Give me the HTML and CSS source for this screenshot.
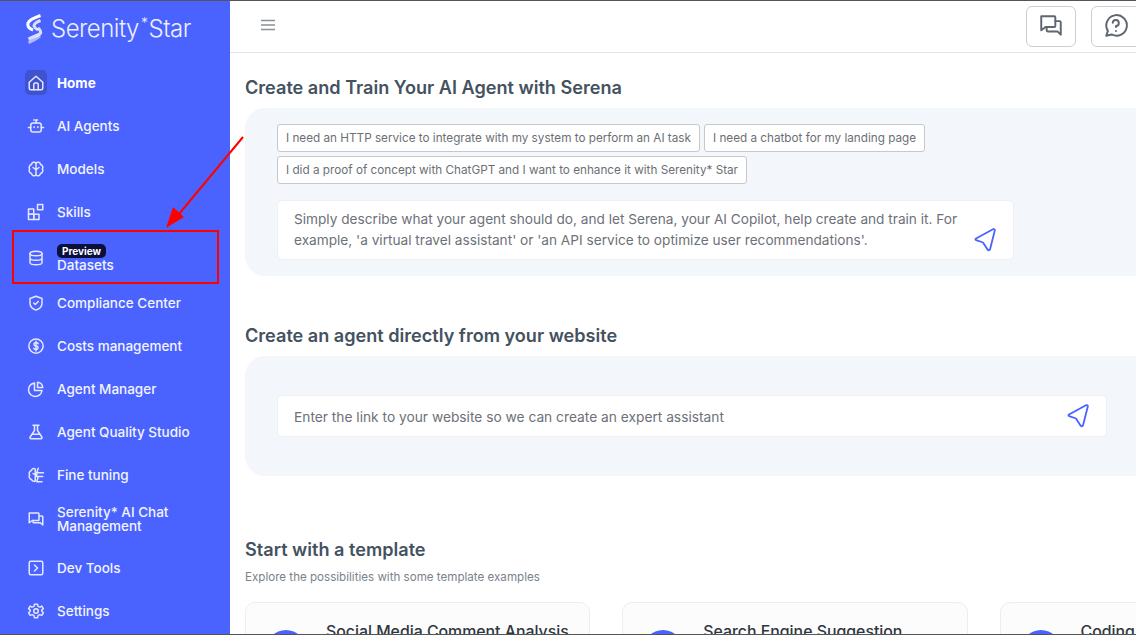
FILE: index.html
```html
<!DOCTYPE html>
<html lang="en">
<head>
  <meta charset="UTF-8" />
  <title>Serenity* Star</title>
  <link rel="stylesheet" href="styles.css">
</head>
<body>
  <div class="app">
    <aside class="sidebar">
      <div class="logo">
        <svg class="logo-mark" width="17" height="30" viewBox="0 0 17 30" fill="none" stroke="#fff" stroke-width="3">
          <path d="M14.500 1.500 Q4 5 2 9 Q1 14 7 16"/>
          <path d="M14.500 6.500 Q8 9 8 12 Q9 14.500 12 16" stroke-opacity=".8"/>
          <path d="M12 14 Q16 17 14 20 L2.500 25" stroke-opacity=".8"/>
          <path d="M14 22 Q9 26 2.500 28.500" stroke-opacity=".55"/>
        </svg>
        <span class="logo-text">Serenity<sup>*</sup>Star</span>
      </div>
      <nav class="nav">
        <a class="nav-item active">
          <span class="nav-icon"><svg width="18" height="18" viewBox="0 0 24 24"><path d="M3 11 12 3l9 8v8a2 2 0 0 1-2 2H5a2 2 0 0 1-2-2z"/><path d="M9 21v-7a2 2 0 0 1 2-2h2a2 2 0 0 1 2 2v7"/></svg></span>
          <span>Home</span>
        </a>
        <a class="nav-item">
          <span class="nav-icon"><svg width="18" height="18" viewBox="0 0 24 24"><rect x="5" y="8" width="14" height="12" rx="3"/><path d="M12 8V5M9 4h5M2 14h3M19 14h3M9.500 13v1M14.500 13v1"/></svg></span>
          <span>AI Agents</span>
        </a>
        <a class="nav-item">
          <span class="nav-icon"><svg width="18" height="18" viewBox="0 0 24 24"><path d="M12 4a3.500 3.500 0 0 0-6 2 4 4 0 0 0-2.500 6A4 4 0 0 0 6 18a3.500 3.500 0 0 0 6 2 3.500 3.500 0 0 0 6-2 4 4 0 0 0 2.500-6A4 4 0 0 0 18 6a3.500 3.500 0 0 0-6-2z"/><path d="M12 4v16M8 10l4 3 4-3"/></svg></span>
          <span>Models</span>
        </a>
        <a class="nav-item">
          <span class="nav-icon"><svg width="18" height="18" viewBox="0 0 24 24"><rect x="2" y="8" width="7" height="7"/><rect x="2" y="15" width="7" height="7"/><rect x="9" y="15" width="7" height="7"/><rect x="14" y="2" width="7" height="7"/></svg></span>
          <span>Skills</span>
        </a>
        <a class="nav-item with-badge">
          <span class="nav-icon"><svg width="18" height="18" viewBox="0 0 24 24"><ellipse cx="12" cy="6" rx="8" ry="3"/><path d="M4 6v12c0 1.700 3.600 3 8 3s8-1.300 8-3V6M4 12c0 1.700 3.600 3 8 3s8-1.300 8-3"/></svg></span>
          <span class="nav-stack">
            <span class="badge">Preview</span>
            <span>Datasets</span>
          </span>
        </a>
        <a class="nav-item">
          <span class="nav-icon"><svg width="18" height="18" viewBox="0 0 24 24"><path d="M12 3l8 3v6c0 5-3.500 8-8 9.500C7.500 20 4 17 4 12V6z"/><path d="M9 12l2 2 4-4"/></svg></span>
          <span>Compliance Center</span>
        </a>
        <a class="nav-item">
          <span class="nav-icon"><svg width="18" height="18" viewBox="0 0 24 24"><circle cx="12" cy="12" r="9.500"/><path d="M15 9a2.500 2 0 0 0-2.500-1.500h-1a2.250 2.250 0 0 0 0 4.500h1a2.250 2.250 0 0 1 0 4.500h-1A2.500 2 0 0 1 9 15M12 5.500v13"/></svg></span>
          <span>Costs management</span>
        </a>
        <a class="nav-item">
          <span class="nav-icon"><svg width="18" height="18" viewBox="0 0 24 24"><path d="M10 4a9 9 0 1 0 10 10h-10z"/><path d="M14 3a7.500 7.500 0 0 1 7 7h-7z"/></svg></span>
          <span>Agent Manager</span>
        </a>
        <a class="nav-item">
          <span class="nav-icon"><svg width="18" height="18" viewBox="0 0 24 24"><path d="M8 3h8M10 3v7l-6 9a1.500 1.500 0 0 0 1.300 2h13.400a1.500 1.500 0 0 0 1.300-2l-6-9V3M7 15h10"/></svg></span>
          <span>Agent Quality Studio</span>
        </a>
        <a class="nav-item">
          <span class="nav-icon"><svg width="18" height="18" viewBox="0 0 24 24"><path d="M11 4a3 3 0 0 0-5 2 4 4 0 0 0-2.500 6A4 4 0 0 0 6 18a3.500 3.500 0 0 0 5 2V4zM8 10l3 2"/><path d="M15 3l-2 6h9M13 9v5h8M15 14l-2 7h7"/></svg></span>
          <span>Fine tuning</span>
        </a>
        <a class="nav-item tall">
          <span class="nav-icon"><svg width="18" height="18" viewBox="0 0 24 24"><path d="M3 4h12a1 1 0 0 1 1 1v8a1 1 0 0 1-1 1H7l-4 3z"/><path d="M16 8h4a1 1 0 0 1 1 1v11l-3-3H9a1 1 0 0 1-1-1v-2"/></svg></span>
          <span>Serenity* AI Chat Management</span>
        </a>
        <a class="nav-item">
          <span class="nav-icon"><svg width="18" height="18" viewBox="0 0 24 24"><rect x="3" y="3" width="18" height="18" rx="2"/><path d="M10 8l4 4-4 4"/></svg></span>
          <span>Dev Tools</span>
        </a>
        <a class="nav-item">
          <span class="nav-icon"><svg width="18" height="18" viewBox="0 0 24 24"><path d="M10 3h4l.7 2.800 2.500 1 2.500-1.400 2 3.400-2 2 .1 1.400 2 2.200-2 3.400-2.600-1-2.500 1.400L14 21h-4l-.7-2.800-2.500-1.400-2.600 1-2-3.400 2-2.200v-1.400l-2-2 2-3.400 2.500 1.400 2.600-1z"/><circle cx="12" cy="12" r="3"/></svg></span>
          <span>Settings</span>
        </a>
      </nav>
    </aside>

    <main class="main">
      <header class="topbar">
        <svg class="menu-icon" width="14" height="12" viewBox="0 0 14 12"><path d="M0 1.500h14M0 6h14M0 10.500h14"/></svg>
        <div class="top-actions">
          <button class="top-btn"><svg width="26" height="26" viewBox="0 0 24 24"><path d="M3 3h12a1 1 0 0 1 1 1v8a1 1 0 0 1-1 1H7l-4 3z"/><path d="M16 7.500h4a1 1 0 0 1 1 1V20l-3-3H9a1 1 0 0 1-1-1v-3"/></svg></button>
          <button class="top-btn"><svg width="26" height="26" viewBox="0 0 24 24"><path d="M3 21l1.500-4.500a9.500 9.500 0 1 1 3.500 3.300z"/><path d="M12 13v-1a2.800 2.800 0 1 0-3-3M12 16.500v.1"/></svg></button>
        </div>
      </header>

      <section class="block">
        <h2 class="block-title">Create and Train Your AI Agent with Serena</h2>
        <div class="panel">
          <div class="chips">
            <span class="chip">I need an HTTP service to integrate with my system to perform an AI task</span>
            <span class="chip">I need a chatbot for my landing page</span>
            <span class="chip">I did a proof of concept with ChatGPT and I want to enhance it with Serenity* Star</span>
          </div>
          <div class="prompt">
            <p>Simply describe what your agent should do, and let Serena, your AI Copilot, help create and train it. For example, 'a virtual travel assistant' or 'an API service to optimize user recommendations'.</p>
            <svg class="send" width="22" height="24" viewBox="0 0 22 24"><path d="M19 1.200 2 10.500Q.8 11.500 2.200 12.200L9 14.500 13.500 21.500Q15 23 16 21.500L20.800 2.500Q21 .6 19 1.200z"/></svg>
          </div>
        </div>
      </section>

      <section class="block site">
        <h2 class="block-title">Create an agent directly from your website</h2>
        <div class="panel site-panel">
          <div class="url-input">
            <span class="url-text">Enter the link to your website so we can create an expert assistant</span>
            <svg class="send" width="22" height="24" viewBox="0 0 22 24"><path d="M19 1.200 2 10.500Q.8 11.500 2.200 12.200L9 14.500 13.500 21.500Q15 23 16 21.500L20.800 2.500Q21 .6 19 1.200z"/></svg>
          </div>
        </div>
      </section>

      <section class="block templates">
        <h2 class="block-title">Start with a template</h2>
        <p class="subtitle">Explore the possibilities with some template examples</p>
        <div class="cards">
          <div class="card"><span class="card-dot"></span><span class="card-name">Social Media Comment Analysis</span></div>
          <div class="card"><span class="card-dot"></span><span class="card-name">Search Engine Suggestion</span></div>
          <div class="card"><span class="card-dot"></span><span class="card-name">Coding Assistant</span></div>
        </div>
      </section>
    </main>
  </div>

  <!-- annotation drawn over the screenshot -->
  <div class="callout-box"></div>
  <svg class="callout-arrow" width="90" height="100" viewBox="0 0 90 100">
    <path d="M78 3 14 80" stroke="#f00" stroke-width="2" fill="none"/>
    <path d="M1 94 8 73 19 83z" fill="#f00"/>
  </svg>
  <div class="edge edge-top"></div>
  <div class="edge edge-bottom"></div>
</body>
</html>
```

FILE: styles.css
```css
* {
  box-sizing: border-box;
}

body {
  margin: 0;
  height: 635px;
  overflow: hidden;
  font-family: Inter, Roboto, sans-serif;
  background: #fff;
  position: relative;
}

.app {
  display: flex;
  height: 635px;
}

/* sidebar */
.sidebar {
  width: 230px;
  flex-shrink: 0;
  background: #4a63ff;
  color: #fff;
}

.logo {
  display: flex;
  align-items: center;
  gap: 8px;
  height: 54px;
  padding: 3px 0 0 26px;
}

.logo-text {
  font-family: Inter, sans-serif;
  font-size: 24px;
  font-weight: 300;
  letter-spacing: -.5px;
  white-space: nowrap;
  opacity: .9;
}

.logo-text sup {
  font-size: 14px;
  line-height: 0;
  margin: 0 1px 0 2px;
}

.nav {
  display: flex;
  flex-direction: column;
  padding: 7px 0 0 25px;
}

.nav-item {
  display: flex;
  align-items: center;
  gap: 10px;
  height: 43px;
  font-size: 13.500px;
  line-height: 14px;
  font-weight: 500;
  color: #f2f4ff;
}

.nav-item.active {
  font-weight: 700;
  color: #fff;
}

.nav-item.tall {
  height: 45px;
  margin-bottom: 5px;
  padding-right: 30px;
}

.nav-item.with-badge {
  height: 48px;
  padding-top: 2px;
}

.nav-icon {
  width: 22px;
  height: 25px;
  flex-shrink: 0;
  display: flex;
  align-items: center;
  justify-content: center;
  border-radius: 5px;
}

.nav-item.active .nav-icon {
  background: #3f53cf;
}

.nav-icon svg {
  fill: none;
  stroke: #e4e8ff;
  stroke-width: 2;
  stroke-linejoin: round;
  stroke-linecap: round;
}

.nav-stack {
  display: flex;
  flex-direction: column;
  align-items: flex-start;
}

.badge {
  background: #0a0f3c;
  color: #fff;
  font-size: 10px;
  font-weight: 700;
  line-height: 14px;
  padding: 0 5px;
  border-radius: 5px;
}

/* main area */
.main {
  flex: 1;
  min-width: 0;
  overflow: hidden;
}

.topbar {
  display: flex;
  align-items: center;
  justify-content: space-between;
  height: 53px;
  padding: 0 0 0 31px;
  border-bottom: 1px solid #e3e3e6;
}

.menu-icon {
  margin-top: -2px;
  fill: none;
  stroke: #8b8f96;
  stroke-width: 1.300;
}

.top-actions {
  display: flex;
  gap: 15px;
  margin-right: -5px;
}

.top-btn {
  width: 50px;
  height: 41px;
  display: flex;
  align-items: center;
  justify-content: center;
  padding: 0;
  background: #fff;
  border: 1px solid #ccced4;
  border-radius: 6px;
}

.top-btn svg {
  fill: none;
  stroke: #5f6670;
  stroke-width: 1.800;
  stroke-linejoin: round;
  stroke-linecap: round;
}

.block {
  padding-left: 15px;
  margin-right: -30px;
}

.block-title {
  margin: 0;
  padding-top: 23px;
  font-size: 18.100px;
  line-height: 22px;
  font-weight: 600;
  color: #44525f;
}

.panel {
  margin-top: 10px;
  height: 168px;
  padding: 16px 32px 0;
  background: #f3f6fa;
  border-radius: 20px;
}

.chips {
  display: flex;
  flex-wrap: wrap;
  gap: 4px;
  width: 700px;
}

.chip {
  height: 28px;
  padding: 0 8px;
  display: flex;
  align-items: center;
  background: #fff;
  border: 1px solid #c6c8cc;
  border-radius: 3px;
  font-size: 11.720px;
  color: #6b6f76;
  white-space: nowrap;
}

.prompt {
  position: relative;
  width: 737px;
  height: 60px;
  margin-top: 16px;
  padding: 8px 16px;
  background: #fff;
  border: 1px solid #eef0f3;
  border-radius: 5px;
}

.prompt p {
  margin: 0;
  font-size: 13.650px;
  line-height: 21px;
  color: #6d7178;
}

.prompt .send {
  position: absolute;
  right: 17px;
  bottom: 7px;
}

.send {
  fill: none;
  stroke: #4a63ff;
  stroke-width: 1.800;
  stroke-linejoin: round;
}

.site .block-title {
  padding-top: 48px;
}

.site-panel {
  height: 120px;
  padding-top: 39px;
}

.url-input {
  display: flex;
  align-items: center;
  justify-content: space-between;
  width: 830px;
  height: 42px;
  padding: 0 17px 0 16px;
  background: #fff;
  border: 1px solid #eef0f3;
  border-radius: 4px;
  font-size: 13.750px;
  color: #6d7178;
}

.url-text {
  margin-top: 2px;
}

.templates .block-title {
  padding-top: 62px;
}

.subtitle {
  margin: 9px 0 0;
  font-size: 11.600px;
  line-height: 16px;
  color: #7a828c;
}

.cards {
  display: flex;
  gap: 32px;
  margin-top: 17px;
}

.card {
  width: 345.300px;
  height: 120px;
  flex-shrink: 0;
  display: flex;
  gap: 20px;
  padding: 20px 20px 0;
  background: #fcfcfd;
  border: 1px solid #eeeef0;
  border-radius: 10px;
}

.card-dot {
  width: 40px;
  height: 40px;
  margin-top: 7px;
  border-radius: 50%;
  background: #4a63ff;
  flex-shrink: 0;
}

.card-name {
  font-size: 15.850px;
  line-height: 18px;
  font-weight: 500;
  color: #2f3640;
  white-space: nowrap;
}

/* annotation + window edges */
.callout-box {
  position: absolute;
  left: 12px;
  top: 230px;
  width: 207px;
  height: 54px;
  border: 2px solid #f00;
}

.callout-arrow {
  position: absolute;
  left: 165px;
  top: 134px;
}

.edge {
  position: absolute;
  left: 0;
  right: 0;
  height: 1px;
  background: #555;
}

.edge-top {
  top: 0;
}

.edge-bottom {
  bottom: 0;
}
```
